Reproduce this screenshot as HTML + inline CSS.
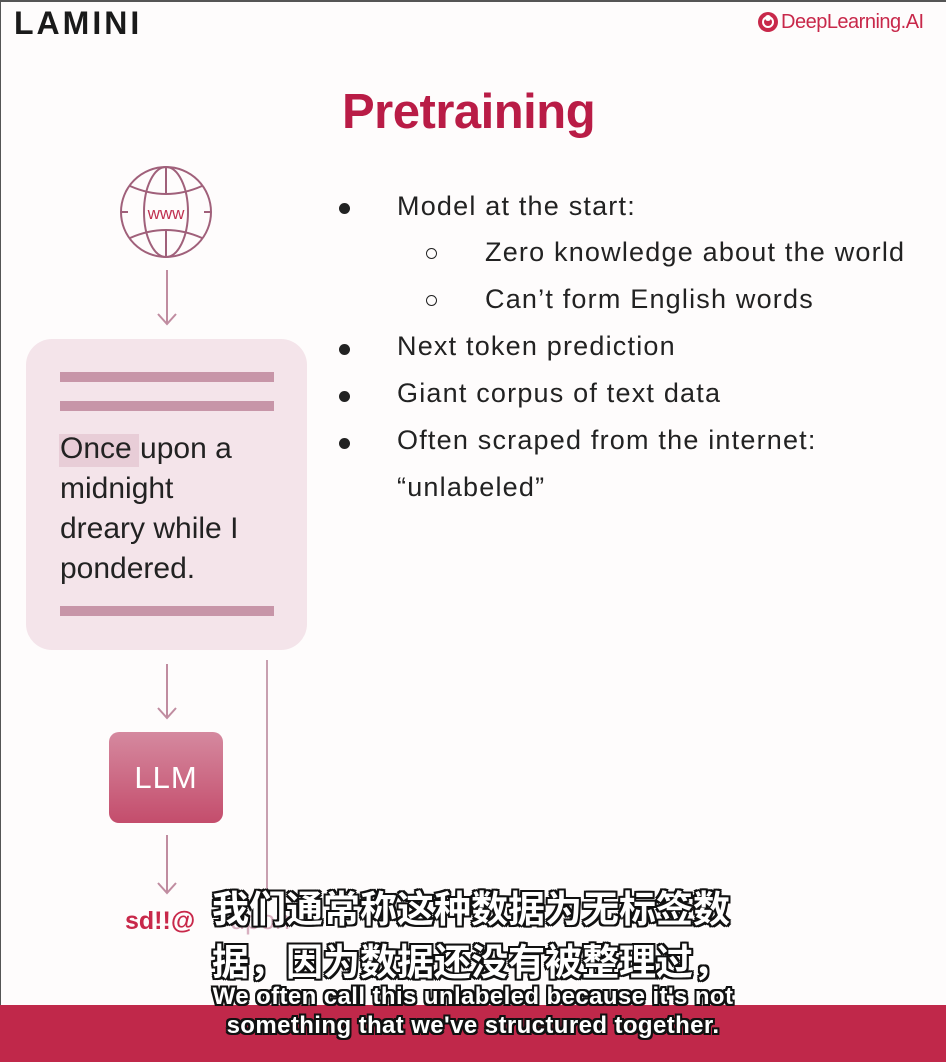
<!DOCTYPE html>
<html><head><meta charset="utf-8"><style>
body{margin:0;width:946px;height:1062px;background:#fefcfc;position:relative;overflow:hidden;font-family:"Liberation Sans",sans-serif;}
.a{position:absolute;}
.bt{position:absolute;font-size:27px;color:#222;white-space:nowrap;letter-spacing:1.2px}
.dot{position:absolute;width:11px;height:11px;border-radius:50%;background:#222;}
.cir{position:absolute;width:9px;height:9px;border-radius:50%;border:1.5px solid #222;}
.line{position:absolute;left:60px;width:214px;height:10px;background:#c795a8;}
.zh{position:absolute;font-family:"Liberation Sans","Noto Sans CJK SC",sans-serif;font-size:37px;font-weight:bold;color:#fff;text-shadow:2px 2px 0 #111,-2px -2px 0 #111,2px -2px 0 #111,-2px 2px 0 #111,0 2px 0 #111,2px 0 0 #111,0 -2px 0 #111,-2px 0 0 #111;white-space:nowrap;letter-spacing:0px}
.en{position:absolute;left:0;width:946px;text-align:center;font-size:24px;font-weight:bold;color:#fff;letter-spacing:0.4px;text-shadow:2px 2px 0 #111,-2px -2px 0 #111,2px -2px 0 #111,-2px 2px 0 #111,0 2px 0 #111,2px 0 0 #111,0 -2px 0 #111,-2px 0 0 #111;}
</style></head><body>
<div class="a" style="left:0;top:0;width:946px;height:2px;background:#555"></div>
<div class="a" style="left:0;top:0;width:1px;height:1062px;background:#555"></div>
<div class="a" style="left:14px;top:5px;font-size:32px;font-weight:bold;letter-spacing:3px;color:#1a1a1a">LAMINI</div>
<svg class="a" style="left:757px;top:11px" width="22" height="22"><circle cx="11" cy="11" r="10" fill="#c8284a"/><circle cx="11" cy="11" r="5" fill="none" stroke="#fff" stroke-width="2"/><circle cx="11" cy="7" r="3" fill="#fff"/></svg>
<div class="a" style="left:781px;top:11px;font-size:20px;color:#c8284a;letter-spacing:-0.5px">DeepLearning.AI</div>
<div class="a" style="left:342px;top:84px;font-size:49px;font-weight:bold;color:#b91c46;letter-spacing:-0.5px">Pretraining</div>
<svg class="a" style="left:118px;top:164px" width="96" height="96" viewBox="0 0 96 96" fill="none" stroke="#a0607a" stroke-width="2"><circle cx="48" cy="48" r="45"/><ellipse cx="48" cy="48" rx="22" ry="45"/><line x1="48" y1="3" x2="48" y2="30"/><line x1="48" y1="66" x2="48" y2="93"/><path d="M12 22 Q48 38 84 22"/><path d="M12 74 Q48 58 84 74"/><line x1="3" y1="48" x2="10" y2="48"/><line x1="86" y1="48" x2="93" y2="48"/><text x="48" y="55" text-anchor="middle" font-size="17" fill="#c03050" stroke="none" font-family="Liberation Sans">www</text></svg>
<svg class="a" style="left:155px;top:268px" width="24" height="60" fill="none" stroke="#c08ca0" stroke-width="2"><line x1="12" y1="2" x2="12" y2="56"/><path d="M3 46 L12 56 L21 46"/></svg>
<div class="a" style="left:26px;top:339px;width:281px;height:311px;border-radius:26px;background:#f4e4ea"></div>
<div class="line" style="top:372px"></div>
<div class="line" style="top:401px"></div>
<div class="line" style="top:606px"></div>
<div class="a" style="left:59px;top:434px;width:80px;height:33px;background:#e8cdd7"></div>
<div class="a" style="left:60px;top:429px;font-size:30px;line-height:40px;color:#222;white-space:nowrap">Once upon a<br>midnight<br>dreary while I<br>pondered.</div>
<svg class="a" style="left:155px;top:662px" width="24" height="60" fill="none" stroke="#c08ca0" stroke-width="2"><line x1="12" y1="2" x2="12" y2="56"/><path d="M3 46 L12 56 L21 46"/></svg>
<div class="a" style="left:266px;top:660px;width:2px;height:232px;background:#c8a0b0"></div>
<div class="a" style="left:109px;top:732px;width:114px;height:91px;border-radius:10px;background:linear-gradient(#d5899f,#c44d6c);color:#fff;font-size:31px;text-align:center;line-height:91px;letter-spacing:1px">LLM</div>
<svg class="a" style="left:155px;top:833px" width="24" height="64" fill="none" stroke="#c08ca0" stroke-width="2"><line x1="12" y1="2" x2="12" y2="60"/><path d="M3 50 L12 60 L21 50"/></svg>
<div class="a" style="left:125px;top:907px;font-size:25px;font-weight:bold;color:#c8284a">sd!!@</div>
<div class="a" style="left:230px;top:905px;font-size:27px;color:#d8b0c0">upon</div>
<div class="dot" style="left:339px;top:203px"></div><div class="bt" style="left:397px;top:191px">Model at the start:</div>
<div class="cir" style="left:426px;top:248px"></div><div class="bt" style="left:485px;top:237px">Zero knowledge about the world</div>
<div class="cir" style="left:426px;top:295px"></div><div class="bt" style="left:485px;top:284px">Can’t form English words</div>
<div class="dot" style="left:339px;top:344px"></div><div class="bt" style="left:397px;top:331px">Next token prediction</div>
<div class="dot" style="left:339px;top:391px"></div><div class="bt" style="left:397px;top:378px">Giant corpus of text data</div>
<div class="dot" style="left:339px;top:438px"></div><div class="bt" style="left:397px;top:425px">Often scraped from the internet:</div>
<div class="bt" style="left:397px;top:472px">“unlabeled”</div>
<div class="a" style="left:0;top:1005px;width:946px;height:57px;background:#c0284a"></div>
<div class="zh" style="left:212px;top:879px">我们通常称这种数据为无标签数</div>
<div class="zh" style="left:212px;top:932px">据，因为数据还没有被整理过，</div>
<div class="en" style="top:983px">We often call this unlabeled because it's not</div>
<div class="en" style="top:1012px">something that we've structured together.</div>
</body></html>
